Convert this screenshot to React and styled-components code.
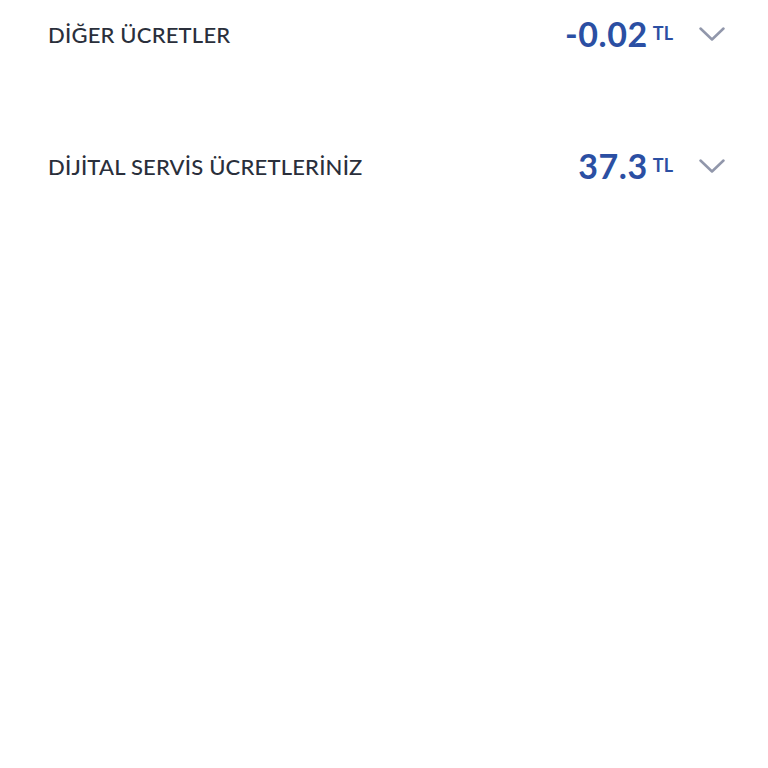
import React from "react";
import styled, { createGlobalStyle } from "styled-components";

const Global = createGlobalStyle`
  html, body { margin: 0; padding: 0; background: #ffffff; }
  body { font-family: "Lato", "Noto Sans", sans-serif; }
`;

const List = styled.div`
  display: flex;
  flex-direction: column;
  gap: 88px;
  padding: 12px 43px 0 48px;
`;

const Row = styled.div`
  display: flex;
  align-items: center;
  justify-content: space-between;
  height: 44px;
`;

const Label = styled.span`
  font-size: 22px;
  font-weight: 500;
  color: #2a2f3b;
  letter-spacing: 0.2px;
`;

const Right = styled.div`
  display: flex;
  align-items: center;
  gap: 26px;
`;

const Amount = styled.div`
  display: flex;
  align-items: flex-start;
  gap: 5px;
  color: #2b4fa3;
`;

const Value = styled.span`
  font-size: 34px;
  font-weight: 700;
  line-height: 1;
  letter-spacing: 0.6px;
`;

const Unit = styled.span`
  font-size: 18px;
  font-weight: 700;
  line-height: 1;
  margin-top: 7px;
`;

const Chevron = () => (
  <svg width="26" height="14" viewBox="0 0 26 14" fill="none">
    <path d="M1.5 1.5 L13 12.5 L24.5 1.5" stroke="#9197ab" strokeWidth="2.5" strokeLinecap="round" strokeLinejoin="round" />
  </svg>
);

const items = [
  { label: "DİĞER ÜCRETLER", value: "-0.02" },
  { label: "DİJİTAL SERVİS ÜCRETLERİNİZ", value: "37.3" },
];

export default function App() {
  return (
    <>
      <Global />
      <List>
        {items.map((it) => (
          <Row key={it.label}>
            <Label>{it.label}</Label>
            <Right>
              <Amount>
                <Value>{it.value}</Value>
                <Unit>TL</Unit>
              </Amount>
              <Chevron />
            </Right>
          </Row>
        ))}
      </List>
    </>
  );
}
